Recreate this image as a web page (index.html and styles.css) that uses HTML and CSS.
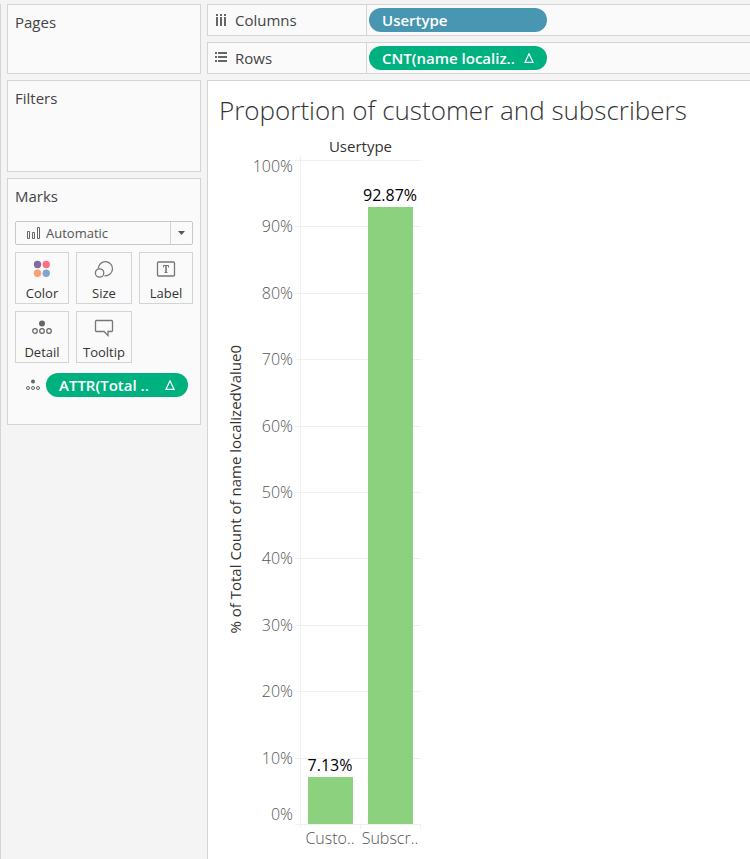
FILE: index.html
```html
<!DOCTYPE html>
<html lang="en">
<head>
<meta charset="utf-8">
<meta name="viewport" content="width=device-width, initial-scale=1">
<title>Proportion of customer and subscribers</title>
<link rel="stylesheet" href="styles.css">
</head>
<body>
<div class="workbook">
  <aside class="sidebar">
    <section class="card card-pages"><h2 class="card-title">Pages</h2></section>
    <section class="card card-filters"><h2 class="card-title">Filters</h2></section>
    <section class="card card-marks">
      <h2 class="card-title">Marks</h2>
      <div class="mark-type">
        <svg class="mark-type-icon" width="13" height="12" viewBox="0 0 13 12" fill="none" stroke="#666"><path d="M.5 4.500h2v7h-2zM5.500 5.500h2v6h-2zM10.500.5h2v11h-2z"/></svg>
        <select class="mark-select" aria-label="Mark type"><option>Automatic</option></select>
        <span class="mark-arrow"><svg width="7" height="4" viewBox="0 0 7 4"><path d="M0 0h7L3.500 4z" fill="#555"/></svg></span>
      </div>
      <div class="tools">
        <button class="tool" type="button">
          <svg width="20" height="18" viewBox="0 0 20 18"><circle cx="5.500" cy="4.500" r="3.700" fill="#84699b"/><circle cx="14.200" cy="4.500" r="3.700" fill="#fb6f81"/><circle cx="5.500" cy="13.200" r="3.700" fill="#f5a173"/><circle cx="14.200" cy="13.200" r="3.700" fill="#7fa5cf"/></svg>
          <span>Color</span>
        </button>
        <button class="tool" type="button">
          <svg width="20" height="18" viewBox="0 0 20 18" fill="none" stroke="#777" stroke-width="1.300"><path d="M4.300 8.600a7.100 7.100 0 1 1 6.100 7.200"/><circle cx="5.600" cy="13" r="4.200"/></svg>
          <span>Size</span>
        </button>
        <button class="tool" type="button">
          <svg width="20" height="18" viewBox="0 0 20 18" fill="none" stroke="#777"><rect x="1.500" y="2" width="17" height="14" rx="1" stroke-width="1.300"/><path d="M7.500 7.500V5.500h5v2M8.500 12.500h3" stroke-width="1"/><path d="M10 5v7.500" stroke-width="1.600"/></svg>
          <span>Label</span>
        </button>
        <button class="tool" type="button">
          <svg width="20" height="18" viewBox="0 0 20 18" fill="none" stroke="#666" stroke-width="1.200"><circle cx="10" cy="4.500" r="3" fill="#666" stroke="none"/><circle cx="3" cy="12" r="2.300"/><circle cx="10" cy="12" r="2.300"/><circle cx="17" cy="12" r="2.300"/></svg>
          <span>Detail</span>
        </button>
        <button class="tool" type="button">
          <svg width="20" height="18" viewBox="0 0 20 18" fill="none" stroke="#777" stroke-width="1.300"><path d="M2.500 1.500h15q1 0 1 1v9q0 1-1 1h-3.500v4l-4-4h-7.500q-1 0-1-1v-9q0-1 1-1z"/></svg>
          <span>Tooltip</span>
        </button>
      </div>
      <div class="mark-field">
        <svg width="14" height="12" viewBox="0 0 14 12" fill="none" stroke="#666"><circle cx="7" cy="2.500" r="2" fill="#666" stroke="none"/><circle cx="2" cy="9" r="1.500"/><circle cx="7" cy="9" r="1.500"/><circle cx="12" cy="9" r="1.500"/></svg>
        <button class="pill pill-measure" type="button"><span>ATTR(Total ..</span><svg class="delta" width="10" height="10" viewBox="0 0 10 10"><path d="M5 .8L9 9.300H1z" fill="none" stroke="#fff" stroke-width="1.200"/></svg></button>
      </div>
    </section>
  </aside>

  <main class="main">
    <section class="shelf">
      <h2 class="shelf-name"><svg width="12" height="12" viewBox="0 0 12 12" fill="#666"><path d="M1 0h2v2H1zM5 0h2v2H5zM9 0h2v2H9zM1 3h2v9H1zM5 3h2v9H5zM9 3h2v9H9z"/></svg>Columns</h2>
      <div class="shelf-fields"><button class="pill pill-dimension" type="button"><span>Usertype</span></button></div>
    </section>
    <section class="shelf">
      <h2 class="shelf-name"><svg width="12" height="12" viewBox="0 0 12 12" fill="#666"><path d="M0 0h2v2H0zM0 4h2v2H0zM0 8h2v2H0zM3 0h9v2H3zM3 4h9v2H3zM3 8h9v2H3z"/></svg>Rows</h2>
      <div class="shelf-fields"><button class="pill pill-measure" type="button"><span>CNT(name localiz..</span><svg class="delta" width="10" height="10" viewBox="0 0 10 10"><path d="M5 .8L9 9.300H1z" fill="none" stroke="#fff" stroke-width="1.200"/></svg></button></div>
    </section>

    <section class="view">
      <h1 class="view-title">Proportion of customer and subscribers</h1>
      <div class="chart">
        <div class="axis-title">% of Total Count of name localizedValue0</div>
        <div class="field-title">Usertype</div>
        <ol class="ticks">
          <li>100%</li><li>90%</li><li>80%</li><li>70%</li><li>60%</li><li>50%</li><li>40%</li><li>30%</li><li>20%</li><li>10%</li><li>0%</li>
        </ol>
        <div class="gridlines"><i></i><i></i><i></i><i></i><i></i><i></i><i></i><i></i><i></i><i></i></div>
        <div class="axis-line"></div>
        <div class="bars">
          <div class="column"><span class="value">7.13%</span><div class="bar" style="height:7.13%"></div></div>
          <div class="column"><span class="value">92.87%</span><div class="bar" style="height:92.87%"></div></div>
        </div>
        <div class="category-ticks"><i></i><i></i></div>
        <div class="categories"><span>Custo..</span><span>Subscr..</span></div>
      </div>
    </section>
  </main>
</div>
</body>
</html>
```

FILE: styles.css
```css
* { box-sizing: border-box; }

body {
  margin: 0;
  background: #f4f4f4;
  color: #333;
  font: 15px/20px "Open Sans", "Noto Sans", sans-serif;
}

h1, h2, ol { margin: 0; padding: 0; font-weight: 400; }
button, select { font: inherit; color: inherit; margin: 0; }
svg { display: block; flex: none; }

.workbook { display: flex; gap: 6px; min-height: 100vh; padding-top: 4px; }

/* Sidebar cards */
.sidebar {
  display: flex;
  flex-direction: column;
  gap: 6px;
  flex: 0 0 201px;
  padding-left: 6px;
  border-left: 1px solid #d4d4d4;
}
.card { padding: 7px; background: #fafafa; border: 1px solid #d4d4d4; }
.card-pages { min-height: 70px; }
.card-filters { min-height: 92px; }
.card-marks { padding-bottom: 27px; }
.card-title, .shelf-name { font-size: 15px; color: #444; }

.mark-type {
  display: flex;
  align-items: center;
  position: relative;
  height: 24px;
  margin: 15px 0 7px;
}
.mark-type-icon { position: absolute; left: 12px; pointer-events: none; }
.mark-select {
  appearance: none;
  width: 100%;
  height: 24px;
  padding: 0 24px 0 30px;
  border: 1px solid #c8c8c8;
  border-radius: 2px;
  background: #fafafa;
  font-size: 13px;
  color: #555;
}
.mark-arrow {
  position: absolute;
  right: 1px;
  display: grid;
  place-items: center;
  width: 22px;
  height: 22px;
  border-left: 1px solid #d4d4d4;
  pointer-events: none;
}

.tools { display: grid; grid-template-columns: 54fr 56fr 54fr; gap: 7px; }
.tool {
  display: flex;
  flex-direction: column;
  align-items: center;
  gap: 5px;
  height: 52px;
  padding: 7px 0 0;
  border: 1px solid #d4d4d4;
  background: #fafafa;
  font-size: 13px;
  line-height: 20px;
}

.mark-field { display: flex; align-items: center; gap: 6px; margin-top: 10px; padding: 0 5px 0 11px; }
.mark-field .pill { flex: 1; }

.pill {
  display: flex;
  align-items: center;
  justify-content: space-between;
  height: 24px;
  padding: 0 13px;
  border: 0;
  border-radius: 12px;
  color: #fff;
  font-size: 15px;
  font-weight: 600;
  white-space: nowrap;
}
.pill-dimension { background: #4996b2; }
.pill-measure { background: #00b180; }

/* Shelves */
.main { display: flex; flex-direction: column; gap: 6px; flex: 1; min-width: 0; }
.shelf {
  display: flex;
  height: 32px;
  background: #fafafa;
  border: 1px solid #d4d4d4;
  border-right: 0;
}
.shelf-name {
  display: flex;
  align-items: center;
  gap: 8px;
  width: 159px;
  padding-left: 7px;
  border-right: 1px solid #d4d4d4;
}
.shelf-fields { display: flex; align-items: center; padding-left: 2px; }
.shelf-fields .pill { width: 178px; }

/* View */
.view {
  display: flex;
  flex-direction: column;
  flex: 1;
  padding: 12px 11px 9px;
  background: #fff;
  border: 1px solid #d4d4d4;
  border-width: 1px 0 0 1px;
}
.view-title { font-size: 26px; line-height: 34px; font-weight: 300; }

.chart {
  display: grid;
  grid-template-columns: 32px 44px 5px 121px;
  grid-template-rows: 33px minmax(400px, 1fr) 26px;
  flex: 1;
  font-size: 16px;
}
.axis-title {
  grid-area: 2 / 1;
  justify-self: center;
  align-self: center;
  margin-bottom: 6px;
  writing-mode: vertical-rl;
  transform: rotate(180deg);
  white-space: nowrap;
  font-size: 15px;
  font-weight: 500;
}
.field-title {
  grid-area: 1 / 4;
  padding-top: 9px;
  text-align: center;
  font-size: 15px;
  font-weight: 500;
}
.ticks {
  grid-area: 2 / 2;
  display: grid;
  grid-template-rows: repeat(10, minmax(0, 1fr)) 0;
  justify-items: end;
  align-items: start;
  padding-right: 2px;
  list-style: none;
  color: #555;
  font-weight: 300;
}
.ticks li { margin-top: -10px; }
.ticks li:first-child { margin-top: -4px; }
.ticks li:last-child { margin-top: -20px; }

.gridlines {
  grid-area: 2 / 3 / 3 / 5;
  display: grid;
  grid-template-rows: repeat(10, 1fr);
}
.gridlines i { border-top: 1px solid #f0f0f0; }
.axis-line { grid-area: 2 / 4; margin: -4px 0; border-left: 1px solid #f0f0f0; }
.bars {
  grid-area: 2 / 4;
  display: grid;
  grid-template-columns: 1fr 1fr;
  padding-right: 1px;
}
.column { display: flex; flex-direction: column; justify-content: flex-end; align-items: center; }
.bar { width: 45px; flex: none; background: #8cd17d; }
.value { margin-bottom: 2px; color: #000; line-height: 20px; }
.category-ticks {
  grid-area: 3 / 3 / 4 / 5;
  display: grid;
  grid-template-columns: 1fr 60px;
  height: 5px;
  border-top: 1px solid #f0f0f0;
}
.category-ticks i { border-right: 1px solid #f0f0f0; }
.categories {
  grid-area: 3 / 4;
  display: grid;
  grid-template-columns: 1fr 1fr;
  padding: 4px 1px 0 0;
  color: #555;
  text-align: center;
  font-weight: 300;
}
```
